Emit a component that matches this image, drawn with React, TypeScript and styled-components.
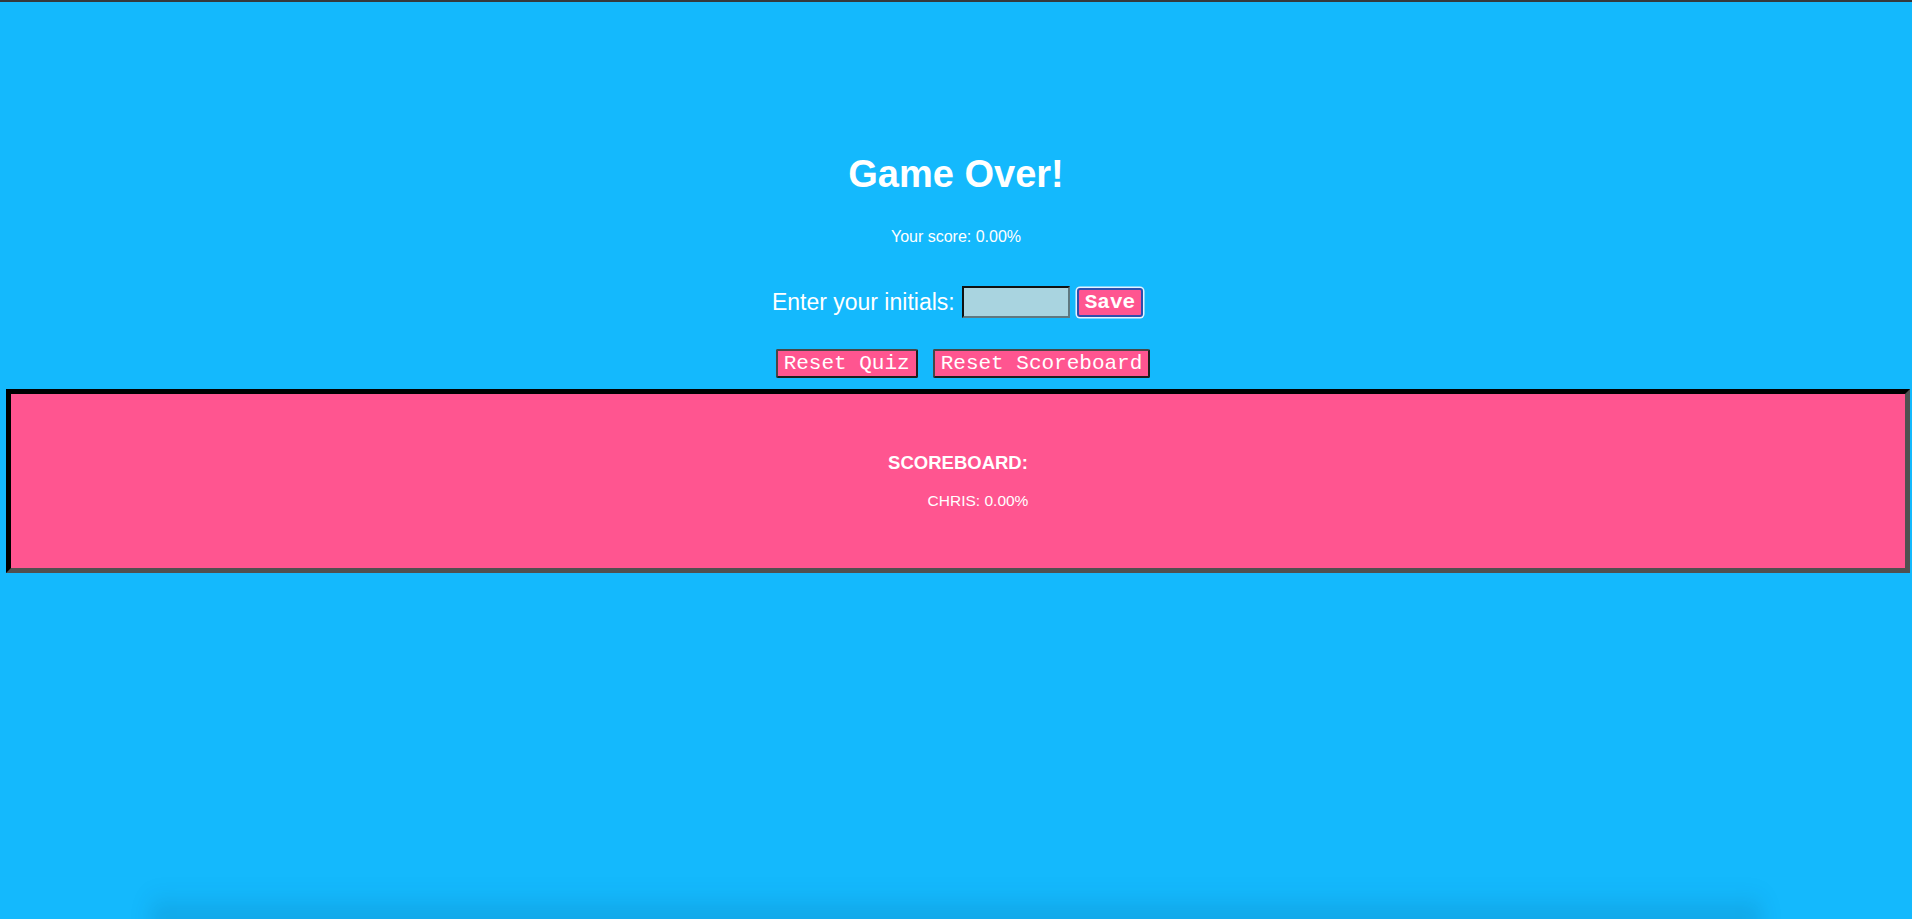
import React from 'react';
import styled, { createGlobalStyle } from 'styled-components';

const GlobalStyle = createGlobalStyle`
  html, body {
    margin: 0;
    padding: 0;
    background: #14b9fd;
  }
  body {
    font-family: 'Liberation Sans', Arial, sans-serif;
    color: #ffffff;
    min-height: 919px;
  }
`;

const Page = styled.div`
  border-top: 2px solid #35393d;
  min-height: 917px;
  display: flex;
  flex-direction: column;
  align-items: center;
`;

const Title = styled.h1`
  margin: 150px 0 0;
  font-size: 38px;
  line-height: 44px;
  font-weight: bold;
`;

const Score = styled.p`
  margin: 32px 0 0;
  font-size: 16px;
  line-height: 18px;
`;

const InitialsRow = styled.form`
  margin: 40px 0 0 3px;
  height: 32px;
  display: flex;
  align-items: center;
  gap: 7px;
`;

const Label = styled.label`
  font-size: 23px;
  line-height: 26px;
`;

const Input = styled.input`
  box-sizing: border-box;
  width: 108px;
  height: 32px;
  background: #a9d4e0;
  border: 2px solid;
  border-color: #111 #5f7880 #5f7880 #111;
  padding: 0 4px;
  font-size: 18px;
  outline: none;
`;

const Button = styled.button<{ $bold?: boolean; $focused?: boolean }>`
  box-sizing: border-box;
  height: 29px;
  padding: 0 6px;
  background: #ff5590;
  color: #ffffff;
  font-family: 'Liberation Mono', 'Courier New', monospace;
  font-size: 21px;
  line-height: 26px;
  font-weight: ${p => (p.$bold ? 'bold' : 'normal')};
  border: 2px solid;
  border-color: ${p => (p.$focused ? '#2c4fae' : '#474747 #1e1e1e #1e1e1e #474747')};
  border-radius: ${p => (p.$focused ? '3px' : '2px')};
  box-shadow: ${p => (p.$focused ? '0 0 0 1.5px #e6f3ff' : 'none')};
  cursor: pointer;
`;

const ButtonRow = styled.div`
  margin-top: 31px;
  padding-left: 14px;
  display: flex;
  gap: 15px;
`;

const Board = styled.section`
  align-self: stretch;
  margin: 11px 2px 0 6px;
  background: #ff5590;
  border: 5px solid;
  border-color: #000 #505050 #505050 #000;
  padding: 58px 0 59px;
  text-align: center;
`;

const BoardTitle = styled.h3`
  margin: 0 0 19px;
  font-size: 18.5px;
  line-height: 21px;
  font-weight: bold;
`;

const ScoreList = styled.ul`
  margin: 0;
  padding-left: 40px;
  list-style: none;
`;

const ScoreItem = styled.li`
  font-size: 15.5px;
  line-height: 17px;
`;

const Shade = styled.div`
  position: fixed;
  left: 150px;
  right: 150px;
  bottom: -10px;
  height: 40px;
  background: linear-gradient(to bottom, rgba(0, 30, 60, 0), rgba(0, 30, 60, 0.16));
  filter: blur(10px);
  pointer-events: none;
`;

const scores = [{ name: 'CHRIS', score: '0.00%' }];

const App = () => {
  return (
    <>
      <GlobalStyle />
      <Page>
        <Title>Game Over!</Title>
        <Score>Your score: 0.00%</Score>
        <InitialsRow onSubmit={e => e.preventDefault()}>
          <Label htmlFor="initials">Enter your initials:</Label>
          <Input id="initials" type="text" />
          <Button type="submit" $bold $focused>Save</Button>
        </InitialsRow>
        <ButtonRow>
          <Button>Reset Quiz</Button>
          <Button>Reset Scoreboard</Button>
        </ButtonRow>
        <Board>
          <BoardTitle>SCOREBOARD:</BoardTitle>
          <ScoreList>
            {scores.map(s => (
              <ScoreItem key={s.name}>{s.name}: {s.score}</ScoreItem>
            ))}
          </ScoreList>
        </Board>
      </Page>
      <Shade />
    </>
  );
};

export default App;
